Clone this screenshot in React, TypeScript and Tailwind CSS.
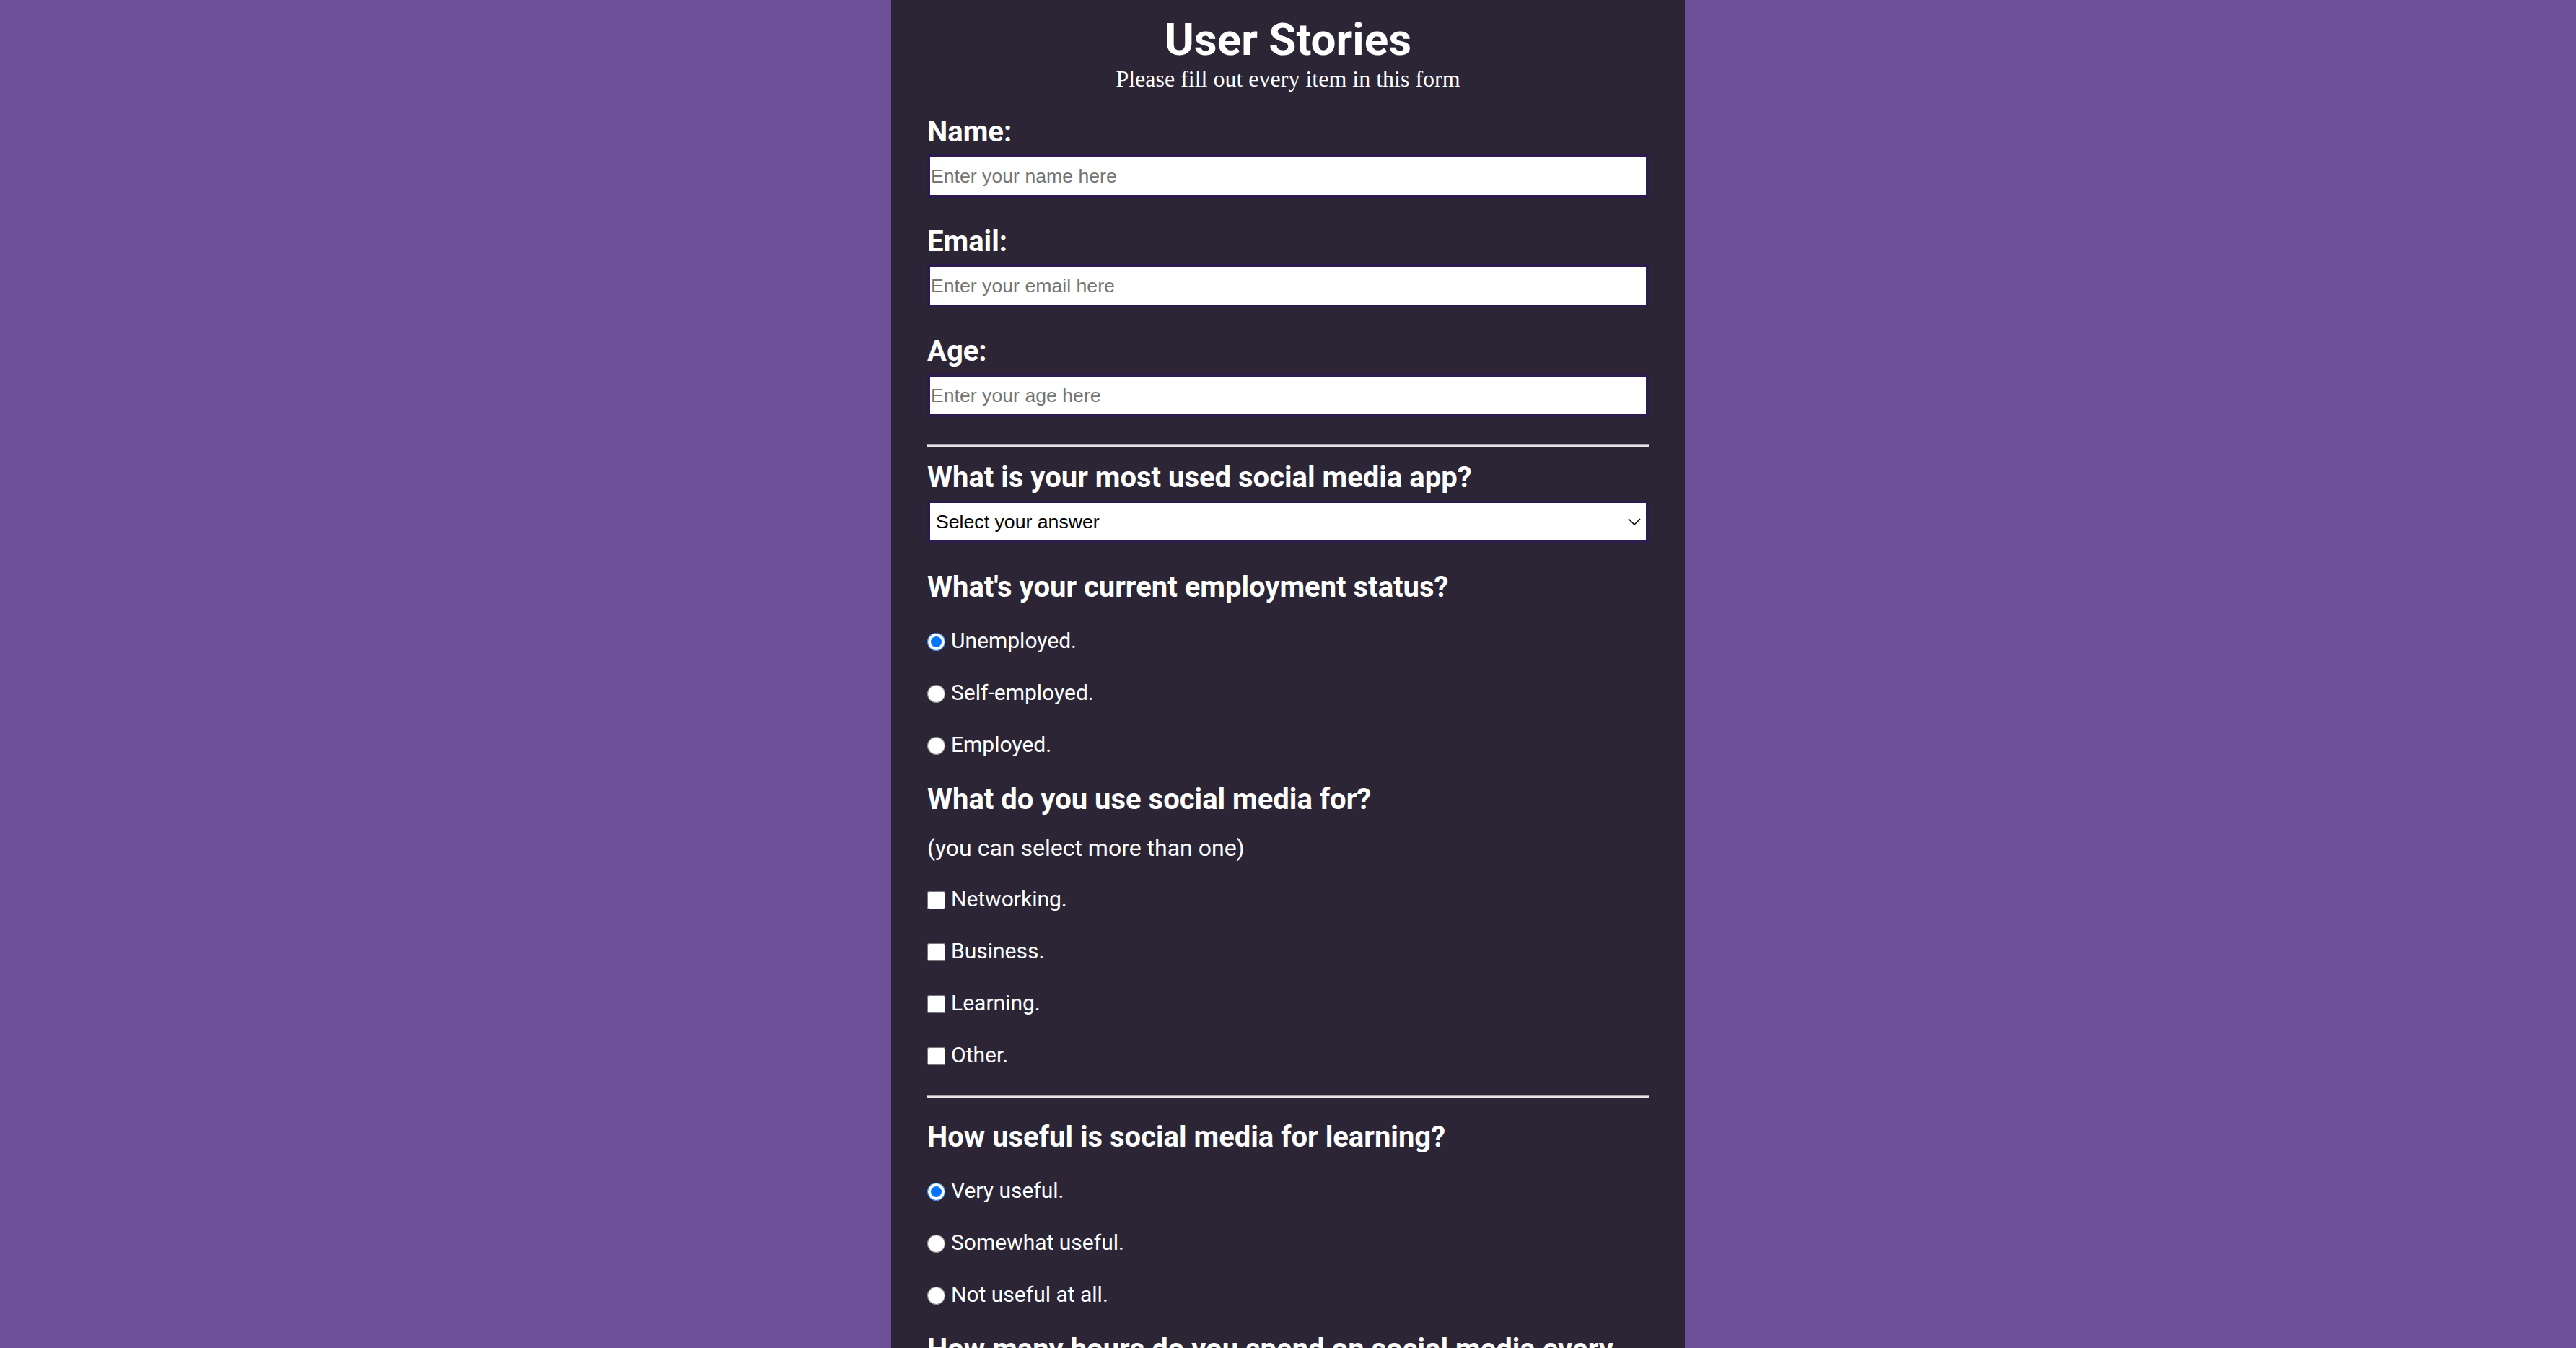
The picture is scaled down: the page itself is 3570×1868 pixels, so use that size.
import { useState } from "react";

const employmentOptions = ["Unemployed.", "Self-employed.", "Employed."];
const useOptions = ["Networking.", "Business.", "Learning.", "Other."];
const usefulOptions = ["Very useful.", "Somewhat useful.", "Not useful at all."];
const hourOptions = ["Less than 1 hour.", "1 to 3 hours.", "More than 3 hours."];

function Field({ label, placeholder, type }: { label: string; placeholder: string; type: string }) {
  return (
    <div className="flex flex-col">
      <label className="text-[40px] leading-[48px] font-bold">{label}</label>
      <input
        type={type}
        placeholder={placeholder}
        className="mt-[7px] h-[60px] w-full border-4 border-[#2d1b4e] bg-white pl-[1px] font-['Liberation_Sans',Arial,sans-serif] text-[26.67px] text-black outline-none placeholder:text-[#757575]"
      />
    </div>
  );
}

function Choice({ type, name, label, checked, onChange }: { type: "radio" | "checkbox"; name: string; label: string; checked?: boolean; onChange?: () => void }) {
  return (
    <label className="flex items-start gap-[8px] text-[30px] leading-[36px]">
      <input
        type={type}
        name={name}
        checked={checked}
        onChange={onChange}
        className="m-0 mt-[7px] h-[25px] w-[25px] shrink-0"
      />
      <span>{label}</span>
    </label>
  );
}

function Heading({ children, className = "" }: { children: React.ReactNode; className?: string }) {
  return <h2 className={`text-[40px] leading-[48px] font-bold ${className}`}>{children}</h2>;
}

export default function App() {
  const [employment, setEmployment] = useState("Unemployed.");
  const [useful, setUseful] = useState("Very useful.");
  const [uses, setUses] = useState<string[]>([]);

  const toggleUse = (u: string) =>
    setUses((prev) => (prev.includes(u) ? prev.filter((x) => x !== u) : [...prev, u]));

  return (
    <div className="min-h-screen bg-[#6e5099] font-['Roboto',sans-serif] text-white">
      <div className="mx-auto flex min-h-screen w-[1100px] flex-col bg-[#2b2536] px-[50px] pt-[19px] pb-[60px]">
        {/* Header */}
        <h1 className="text-center text-[62px] leading-[72px] font-bold">User Stories</h1>
        <p className="text-center font-['Liberation_Serif',serif] text-[32px] leading-[36px]">
          Please fill out every item in this form
        </p>

        <form className="mt-[32px] flex flex-col" onSubmit={(e) => e.preventDefault()}>
          <div className="flex flex-col gap-[37px]">
            <Field label="Name:" placeholder="Enter your name here" type="text" />
            <Field label="Email:" placeholder="Enter your email here" type="email" />
            <Field label="Age:" placeholder="Enter your age here" type="number" />
          </div>

          <hr className="mt-[37px] h-0 border-t-2 border-b-2 border-t-[#a3a3a3] border-b-[#e6e6e6]" />

          <Heading className="mt-[19px]">What is your most used social media app?</Heading>
          <div className="relative mt-[8px]">
            <select
              defaultValue=""
              className="h-[58px] w-full appearance-none border-x-4 border-y-[3px] border-[#2d1b4e] bg-white pl-[8px] font-['Liberation_Sans',Arial,sans-serif] text-[26.67px] text-black outline-none"
            >
              <option value="" disabled>Select your answer</option>
              <option>Instagram</option>
              <option>Facebook</option>
              <option>Twitter</option>
              <option>TikTok</option>
              <option>Other</option>
            </select>
            <svg
              className="pointer-events-none absolute top-1/2 right-[11px] h-[10px] w-[18px] -translate-y-1/2"
              viewBox="0 0 18 10"
              fill="none"
              stroke="#000"
              strokeWidth="1.6"
            >
              <path d="M1 1l8 8 8-8" />
            </svg>
          </div>

          <Heading className="mt-[38px]">What's your current employment status?</Heading>
          <div className="mt-[32px] flex flex-col gap-[36px]">
            {employmentOptions.map((o) => (
              <Choice key={o} type="radio" name="employment" label={o} checked={employment === o} onChange={() => setEmployment(o)} />
            ))}
          </div>

          <Heading className="mt-[34px]">What do you use social media for?</Heading>
          <p className="mt-[25px] text-[32px] leading-[36px]">(you can select more than one)</p>
          <div className="mt-[35px] flex flex-col gap-[36px]">
            {useOptions.map((o) => (
              <Choice key={o} type="checkbox" name="uses" label={o} checked={uses.includes(o)} onChange={() => toggleUse(o)} />
            ))}
          </div>

          <hr className="mt-[37px] h-0 border-t-2 border-b-2 border-t-[#a3a3a3] border-b-[#e6e6e6]" />

          <Heading className="mt-[31px]">How useful is social media for learning?</Heading>
          <div className="mt-[32px] flex flex-col gap-[36px]">
            {usefulOptions.map((o) => (
              <Choice key={o} type="radio" name="useful" label={o} checked={useful === o} onChange={() => setUseful(o)} />
            ))}
          </div>

          <Heading className="mt-[34px]">How many hours do you spend on social media every day?</Heading>
          <div className="mt-[32px] flex flex-col gap-[36px]">
            {hourOptions.map((o) => (
              <Choice key={o} type="radio" name="hours" label={o} />
            ))}
          </div>
        </form>
      </div>
    </div>
  );
}
